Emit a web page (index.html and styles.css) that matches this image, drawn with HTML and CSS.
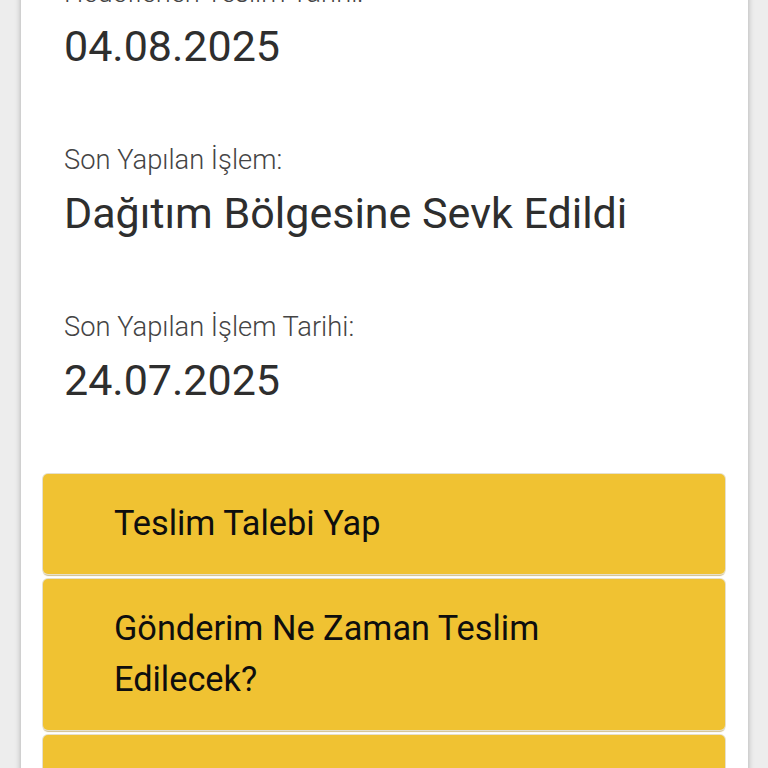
FILE: index.html
```html
<!DOCTYPE html>
<html lang="tr">
<head>
<meta charset="utf-8">
<title>Gönderi Takip</title>
<link rel="stylesheet" href="styles.css">
</head>
<body>
<div class="page">
  <div class="card">
    <div class="info">
      <div class="field">
        <div class="label">Hedeflenen Teslim Tarihi:</div>
        <div class="value">04.08.2025</div>
      </div>
      <div class="field">
        <div class="label">Son Yapılan İşlem:</div>
        <div class="value">Dağıtım Bölgesine Sevk Edildi</div>
      </div>
      <div class="field">
        <div class="label">Son Yapılan İşlem Tarihi:</div>
        <div class="value">24.07.2025</div>
      </div>
    </div>
    <div class="actions">
      <a class="action">Teslim Talebi Yap</a>
      <a class="action">Gönderim Ne Zaman Teslim Edilecek?</a>
      <a class="action">Şube Bilgileri</a>
    </div>
  </div>
</div>
</body>
</html>
```
FILE: styles.css
```css
html, body {
  margin: 0;
  padding: 0;
}
body {
  background: #ededed;
  font-family: Roboto, "Noto Sans", Arial, sans-serif;
  height: 768px;
  overflow: hidden;
}
.page {
  padding: 0 20px 0 21px;
}
.card {
  background: #ffffff;
  margin-top: -23px;
  padding: 0 23px 40px 22px;
  box-shadow: 0 0 6px rgba(0, 0, 0, 0.28);
  min-height: 900px;
}
.info {
  padding-left: 21px;
  display: flex;
  flex-direction: column;
  gap: 73px;
}
.field {
  display: flex;
  flex-direction: column;
  gap: 12px;
}
.label {
  font-size: 27.3px;
  line-height: 32px;
  font-weight: 300;
  color: #444444;
}
.value {
  font-size: 43px;
  line-height: 50px;
  font-weight: 400;
  color: #2e2e2e;
}
.actions {
  margin-top: 69px;
  display: flex;
  flex-direction: column;
  gap: 5px;
}
.action {
  display: block;
  background: #f0c232;
  border-radius: 5px;
  padding: 24px 150px 25px 71px;
  font-size: 34.3px;
  line-height: 51px;
  color: #0e0e0e;
  box-shadow: 0 0 0 1px #e6e0cc, 0 2px 1px rgba(150, 110, 0, 0.45);
}
```
